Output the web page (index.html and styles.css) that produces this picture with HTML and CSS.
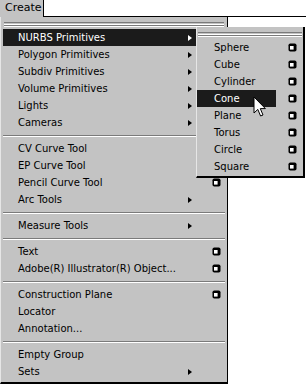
FILE: index.html
```html
<!DOCTYPE html>
<html>
<head>
<meta charset="utf-8">
<link rel="stylesheet" href="styles.css">
</head>
<body>
<div class="menubar">
  <div class="tab">Create</div>
  <div class="rest"></div>
</div>
<div class="menu main">
  <div class="tear"></div>
  <div class="item active"><span class="label">NURBS Primitives</span><span class="arrow"></span><span class="opt"></span></div>
  <div class="item"><span class="label">Polygon Primitives</span><span class="arrow"></span><span class="opt"></span></div>
  <div class="item"><span class="label">Subdiv Primitives</span><span class="arrow"></span><span class="opt"></span></div>
  <div class="item"><span class="label">Volume Primitives</span><span class="arrow"></span><span class="opt"></span></div>
  <div class="item"><span class="label">Lights</span><span class="arrow"></span><span class="opt"></span></div>
  <div class="item"><span class="label">Cameras</span><span class="arrow"></span><span class="opt"></span></div>
  <div class="sep"></div>
  <div class="item"><span class="label">CV Curve Tool</span><span class="noarrow"></span><span class="opt"></span></div>
  <div class="item"><span class="label">EP Curve Tool</span><span class="noarrow"></span><span class="opt"></span></div>
  <div class="item"><span class="label">Pencil Curve Tool</span><span class="noarrow"></span><span class="opt"><svg class="box" width="9" height="9" viewBox="0 0 9 9"><rect x="0.5" y="0.5" width="8" height="8" rx="1.8" fill="#000"/><rect x="2" y="3" width="3.6" height="3.6" fill="#fff"/></svg></span></div>
  <div class="item"><span class="label">Arc Tools</span><span class="arrow"></span><span class="opt"></span></div>
  <div class="sep"></div>
  <div class="item"><span class="label">Measure Tools</span><span class="arrow"></span><span class="opt"></span></div>
  <div class="sep"></div>
  <div class="item"><span class="label">Text</span><span class="noarrow"></span><span class="opt"><svg class="box" width="9" height="9" viewBox="0 0 9 9"><rect x="0.5" y="0.5" width="8" height="8" rx="1.8" fill="#000"/><rect x="2" y="3" width="3.6" height="3.6" fill="#fff"/></svg></span></div>
  <div class="item"><span class="label">Adobe(R) Illustrator(R) Object...</span><span class="noarrow"></span><span class="opt"><svg class="box" width="9" height="9" viewBox="0 0 9 9"><rect x="0.5" y="0.5" width="8" height="8" rx="1.8" fill="#000"/><rect x="2" y="3" width="3.6" height="3.6" fill="#fff"/></svg></span></div>
  <div class="sep"></div>
  <div class="item"><span class="label">Construction Plane</span><span class="noarrow"></span><span class="opt"><svg class="box" width="9" height="9" viewBox="0 0 9 9"><rect x="0.5" y="0.5" width="8" height="8" rx="1.8" fill="#000"/><rect x="2" y="3" width="3.6" height="3.6" fill="#fff"/></svg></span></div>
  <div class="item"><span class="label">Locator</span><span class="noarrow"></span><span class="opt"></span></div>
  <div class="item"><span class="label">Annotation...</span><span class="noarrow"></span><span class="opt"></span></div>
  <div class="sep"></div>
  <div class="item"><span class="label">Empty Group</span><span class="noarrow"></span><span class="opt"></span></div>
  <div class="item"><span class="label">Sets</span><span class="arrow"></span><span class="opt"></span></div>
</div>

<div class="menu sub">
  <div class="tear"></div>
  <div class="item"><span class="label">Sphere</span><span class="opt"><svg class="box" width="9" height="9" viewBox="0 0 9 9"><rect x="0.5" y="0.5" width="8" height="8" rx="1.8" fill="#000"/><rect x="2" y="3" width="3.6" height="3.6" fill="#fff"/></svg></span></div>
  <div class="item"><span class="label">Cube</span><span class="opt"><svg class="box" width="9" height="9" viewBox="0 0 9 9"><rect x="0.5" y="0.5" width="8" height="8" rx="1.8" fill="#000"/><rect x="2" y="3" width="3.6" height="3.6" fill="#fff"/></svg></span></div>
  <div class="item"><span class="label">Cylinder</span><span class="opt"><svg class="box" width="9" height="9" viewBox="0 0 9 9"><rect x="0.5" y="0.5" width="8" height="8" rx="1.8" fill="#000"/><rect x="2" y="3" width="3.6" height="3.6" fill="#fff"/></svg></span></div>
  <div class="item active"><span class="label">Cone</span><span class="opt"><svg class="box" width="9" height="9" viewBox="0 0 9 9"><rect x="0.5" y="0.5" width="8" height="8" rx="1.8" fill="#000"/><rect x="2" y="3" width="3.6" height="3.6" fill="#fff"/></svg></span></div>
  <div class="item"><span class="label">Plane</span><span class="opt"><svg class="box" width="9" height="9" viewBox="0 0 9 9"><rect x="0.5" y="0.5" width="8" height="8" rx="1.8" fill="#000"/><rect x="2" y="3" width="3.6" height="3.6" fill="#fff"/></svg></span></div>
  <div class="item"><span class="label">Torus</span><span class="opt"><svg class="box" width="9" height="9" viewBox="0 0 9 9"><rect x="0.5" y="0.5" width="8" height="8" rx="1.8" fill="#000"/><rect x="2" y="3" width="3.6" height="3.6" fill="#fff"/></svg></span></div>
  <div class="item"><span class="label">Circle</span><span class="opt"><svg class="box" width="9" height="9" viewBox="0 0 9 9"><rect x="0.5" y="0.5" width="8" height="8" rx="1.8" fill="#000"/><rect x="2" y="3" width="3.6" height="3.6" fill="#fff"/></svg></span></div>
  <div class="item"><span class="label">Square</span><span class="opt"><svg class="box" width="9" height="9" viewBox="0 0 9 9"><rect x="0.5" y="0.5" width="8" height="8" rx="1.8" fill="#000"/><rect x="2" y="3" width="3.6" height="3.6" fill="#fff"/></svg></span></div>
</div>

<svg class="cursor" width="14" height="22" viewBox="0 0 14 22"><path d="M1 1 L1 17 L4.8 13.4 L7.6 20 L10 19 L7.3 12.6 L12.4 12.6 Z" fill="#fff" stroke="#000" stroke-width="1" stroke-linejoin="miter"/></svg>
</body>
</html>
```

FILE: styles.css
```css
html, body {
  margin: 0;
  padding: 0;
  background: #fff;
  width: 306px;
  height: 384px;
  overflow: hidden;
  font-family: "DejaVu Sans", "Liberation Sans", sans-serif;
  font-size: 10px;
  color: #000;
}

body {
  position: relative;
}

.menubar {
  display: flex;
  height: 17px;
}

.tab {
  width: 43px;
  background: #c3c3c3;
  padding-left: 5px;
  box-sizing: border-box;
  line-height: 16px;
  font-size: 11px;
  border-bottom: 1px solid #c3c3c3;
}

.rest {
  flex: 1;
  border-left: 1px solid #000;
  border-bottom: 1px solid #000;
  background: #fff;
}

.menu {
  background: #c3c3c3;
  box-sizing: border-box;
}

.main {
  width: 228px;
  height: 367px;
  border-right: 1px solid #000;
  border-bottom: 2px solid #000;
  border-left: 1px solid #e6e6e6;
  padding: 0 2px 0 2px;
}

.tear {
  height: 12px;
  box-sizing: border-box;
  padding-top: 5px;
}

.tear::before {
  content: "";
  display: block;
  height: 1px;
  border-top: 1px solid #7a7a7a;
  border-bottom: 1px solid #fff;
  background: #c3c3c3;
  margin: 0 1px;
}

.tear::after {
  content: "";
  display: block;
  height: 0;
  border-top: 1px solid #7a7a7a;
  border-bottom: 1px solid #fff;
  margin: 0 1px;
}

.item {
  display: flex;
  height: 17px;
  align-items: stretch;
}

.label {
  flex: 1;
  display: flex;
  align-items: center;
  padding-left: 15px;
  white-space: nowrap;
}

.arrow,
.noarrow {
  width: 20px;
  display: flex;
  align-items: center;
  padding-left: 3px;
  box-sizing: border-box;
}

.arrow::before {
  content: "";
  border-left: 4px solid #000;
  border-top: 3.5px solid transparent;
  border-bottom: 3.5px solid transparent;
}

.main .opt {
  width: 20px;
  display: flex;
  align-items: center;
  padding-left: 7px;
  box-sizing: border-box;
}

.item.active .label,
.item.active .arrow {
  background: #1b1b1b;
  color: #fff;
}

.item.active .arrow::before {
  border-left-color: #fff;
}

.sep {
  height: 9px;
  box-sizing: border-box;
  padding-top: 4px;
}

.sep::before {
  content: "";
  display: block;
  border-top: 1px solid #7a7a7a;
  border-bottom: 1px solid #fff;
}

.sub {
  position: absolute;
  left: 196px;
  top: 27px;
  width: 109px;
  height: 151px;
  border-left: 1px solid #e6e6e6;
  border-right: 2px solid #000;
  border-bottom: 2px solid #000;
  padding: 0;
}

.sub .label {
  padding-left: 17px;
}

.sub .opt {
  width: 27px;
  display: flex;
  align-items: center;
  padding-left: 12px;
  box-sizing: border-box;
}

.box {
  display: block;
}

.cursor {
  position: absolute;
  left: 253px;
  top: 96px;
}
```
